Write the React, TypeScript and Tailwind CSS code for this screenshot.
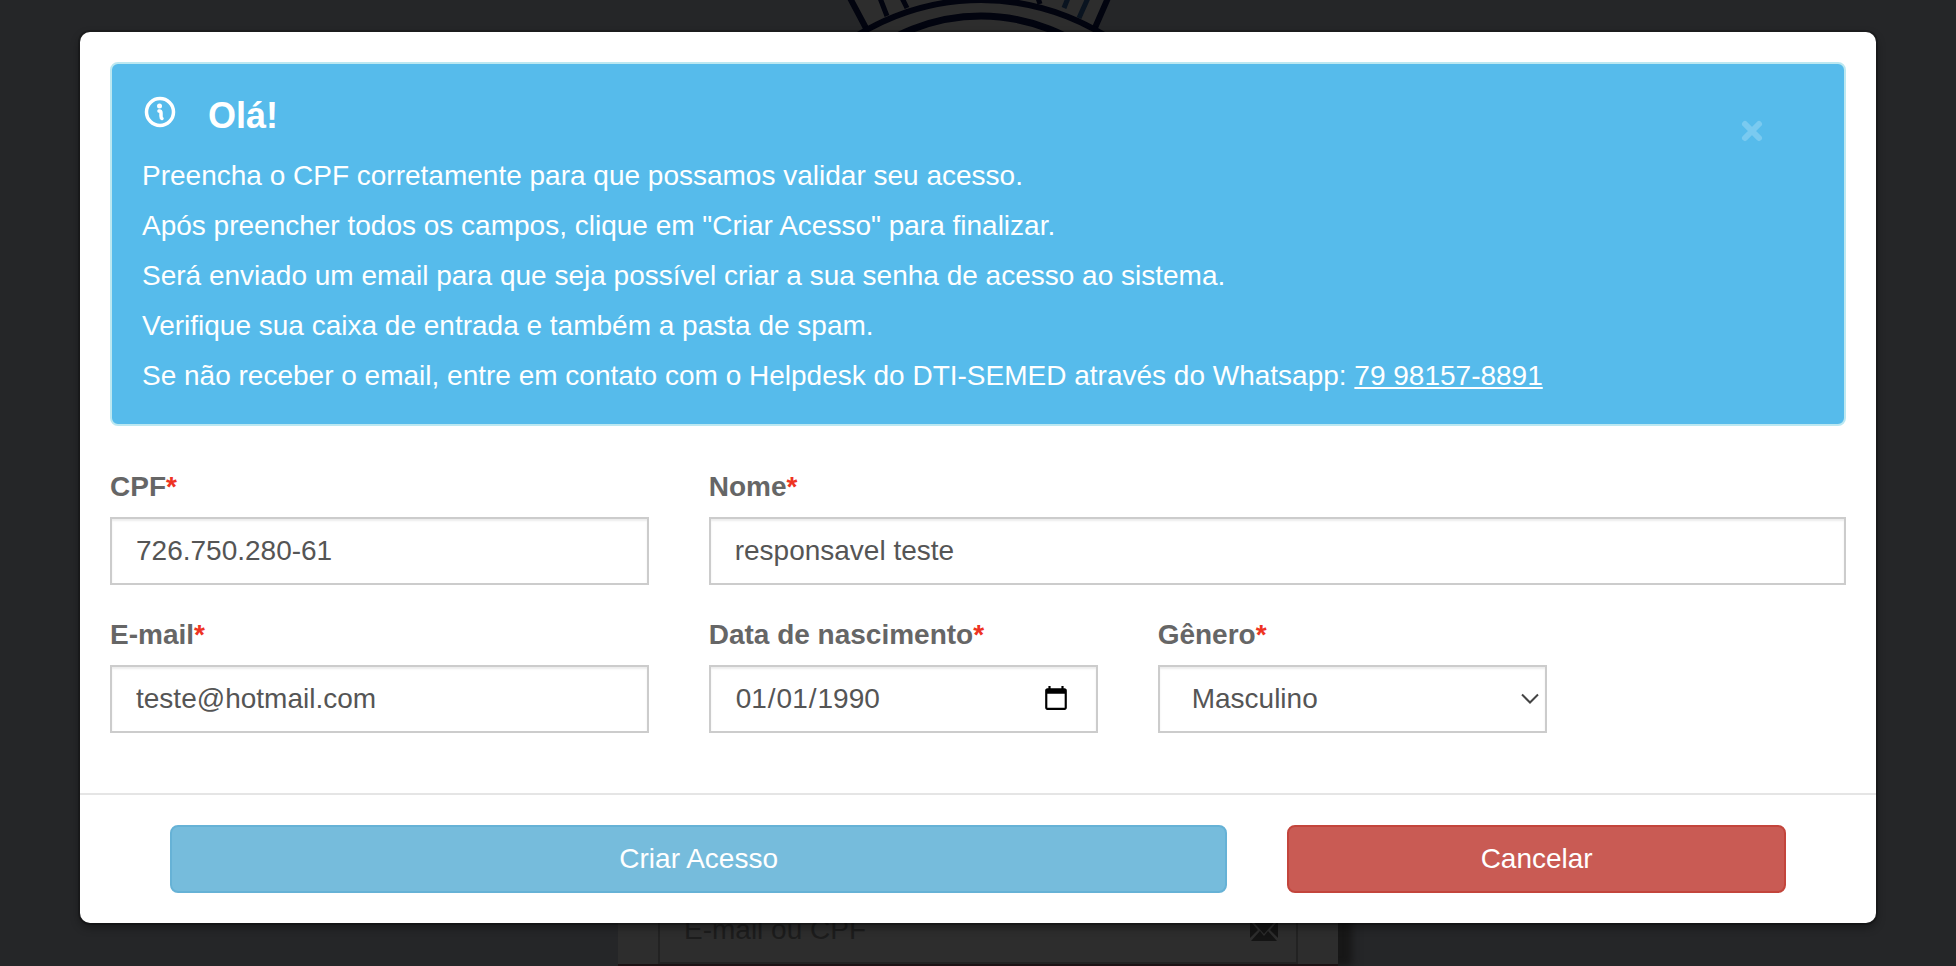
import React, { useState } from 'react';

interface FieldProps {
    id: string;
    label: string;
    className: string;
    children: React.ReactNode;
}

const inputClass =
    'block h-[68px] w-full border-2 border-[#cccccc] bg-white px-6 text-[28px] leading-10 text-[#555555] shadow-[inset_0_2px_2px_rgba(0,0,0,0.075)] outline-none';

const alertLines = [
    'Preencha o CPF corretamente para que possamos validar seu acesso.',
    'Após preencher todos os campos, clique em "Criar Acesso" para finalizar.',
    'Será enviado um email para que seja possível criar a sua senha de acesso ao sistema.',
    'Verifique sua caixa de entrada e também a pasta de spam.',
];

const Field: React.FC<FieldProps> = ({ id, label, className, children }) => (
    <div className={className}>
        <label htmlFor={id} className="mb-2.5 block text-[28px] leading-10 font-bold text-[#666666]">
            {label}
            <span className="text-[#ee3322]">*</span>
        </label>
        {children}
    </div>
);

// Login page that stays dimmed behind the modal
const Backdrop = () => (
    <div className="absolute inset-0 flex flex-col items-center justify-between overflow-hidden bg-[#252628]">
        <svg className="h-8 w-[360px] shrink-0" viewBox="799 0 360 32" fill="none" stroke="#02040f" strokeWidth="5">
            <path d="M852 0 870 32H1094L1108 0Z" fill="#2d2d2d" stroke="none" />
            <path d="M851 -2 868 30M1109 -2 1095 30" strokeWidth="6" />
            <path d="M881 -2 888 16M903 -2 908 8M1039 -2 1041 4" />
            <path d="M1069 -2 1065 8M1089 -2 1080 18" stroke="#0a1420" />
            <circle cx="982" cy="234" r="234" strokeWidth="6" />
            <circle cx="982" cy="201" r="185" strokeWidth="7" />
        </svg>
        <div className="w-[720px] border-b-2 border-[#1d1214] bg-[#2d2d2d] px-10 shadow-[14px_0_8px_#171717]">
            <div className="flex h-[68px] items-center justify-between border-2 border-[#222222] pr-[18px] pl-6 text-[28px] text-[#1c1c1c]">
                <span>E-mail ou CPF</span>
                <svg className="h-6 w-7" viewBox="0 0 28 24" fill="#141414">
                    <path d="M0 0H28L14 16ZM0 3 8 12 0 20ZM28 3V20L20 12ZM1 23 10 13 14 18 18 13 27 23Z" />
                </svg>
            </div>
        </div>
    </div>
);

export default function App() {
    const [cpf, setCpf] = useState<string>('726.750.280-61');
    const [nome, setNome] = useState<string>('responsavel teste');
    const [email, setEmail] = useState<string>('teste@hotmail.com');
    const [nascimento, setNascimento] = useState<string>('1990-01-01');
    const [genero, setGenero] = useState<string>('M');
    const [showAlert, setShowAlert] = useState<boolean>(true);

    return (
        <div className="relative min-h-screen px-20 pt-8 pb-[43px] font-['Liberation_Sans',Arial,sans-serif]">
            <Backdrop />
            <form
                onSubmit={(e) => e.preventDefault()}
                className="relative rounded-[10px] bg-white shadow-[0_0_0_2px_rgba(0,0,0,0.2),0_4px_10px_rgba(0,0,0,0.4)]"
            >
                <div className="px-[30px] pt-[30px] pb-[60px]">
                    {showAlert && (
                        <div className="mb-[41px] rounded-lg border-2 border-[#bce8f1] bg-[#56bbeb] px-[30px] pt-[30px] pb-7 text-[28px] leading-10 text-white">
                            <div className="flex h-[62px] items-start justify-between">
                                <div className="flex items-start gap-8">
                                    <svg className="mt-0.5 ml-0.5 size-8" viewBox="0 0 32 32" fill="none" stroke="currentColor">
                                        <circle cx="16" cy="16" r="13.5" strokeWidth="3.5" />
                                        <circle cx="15.5" cy="10" r="2.5" fill="currentColor" stroke="none" />
                                        <path d="M15 15Q17 14.5 17 17V20Q17 22 18 22.5" strokeWidth="3.5" strokeLinecap="round" />
                                    </svg>
                                    <h4 className="text-4xl leading-11 font-bold">Olá!</h4>
                                </div>
                                <button
                                    type="button"
                                    aria-label="Fechar"
                                    onClick={() => setShowAlert(false)}
                                    className="mt-[21px] mr-[46px] p-1 text-[#7acaf0]"
                                >
                                    <svg className="size-6" viewBox="0 0 24 24" stroke="currentColor" strokeWidth="6" strokeLinecap="round">
                                        <path d="M5 5 19 19M19 5 5 19" />
                                    </svg>
                                </button>
                            </div>
                            <div className="space-y-2.5">
                                {alertLines.map((line) => (
                                    <p key={line}>{line}</p>
                                ))}
                                <p>
                                    Se não receber o email, entre em contato com o Helpdesk do DTI-SEMED através do Whatsapp:{' '}
                                    <a href="#whatsapp" className="underline">79 98157-8891</a>
                                </p>
                            </div>
                        </div>
                    )}

                    <div className="grid grid-cols-12 gap-x-[60px] gap-y-[30px]">
                        <Field id="cpf" label="CPF" className="col-span-4">
                            <input id="cpf" className={inputClass} value={cpf} onChange={(e) => setCpf(e.target.value)} />
                        </Field>
                        <Field id="nome" label="Nome" className="col-span-8">
                            <input id="nome" className={inputClass} value={nome} onChange={(e) => setNome(e.target.value)} />
                        </Field>
                        <Field id="email" label="E-mail" className="col-span-4">
                            <input id="email" type="email" className={inputClass} value={email} onChange={(e) => setEmail(e.target.value)} />
                        </Field>
                        <Field id="nascimento" label="Data de nascimento" className="col-span-3">
                            <input
                                id="nascimento"
                                type="date"
                                className={inputClass}
                                value={nascimento}
                                onChange={(e) => setNascimento(e.target.value)}
                            />
                        </Field>
                        <Field id="genero" label="Gênero" className="col-span-3">
                            <div className="relative">
                                <select
                                    id="genero"
                                    className={`${inputClass} appearance-none pl-8`}
                                    value={genero}
                                    onChange={(e) => setGenero(e.target.value)}
                                >
                                    <option value="M">Masculino</option>
                                    <option value="F">Feminino</option>
                                </select>
                                <svg
                                    className="pointer-events-none absolute top-7 right-2 h-3 w-[18px]"
                                    viewBox="0 0 18 12"
                                    fill="none"
                                    stroke="#444"
                                    strokeWidth="2"
                                >
                                    <path d="M1 1.5 9 9.5 17 1.5" />
                                </svg>
                            </div>
                        </Field>
                    </div>
                </div>

                <div className="grid grid-cols-12 gap-x-[60px] border-t-2 border-[#e5e5e5] px-[90px] py-[30px] text-[28px] leading-10 text-white">
                    <button type="submit" className="col-span-8 h-[68px] rounded-lg border-2 border-[#66b2d6] bg-[#76bcdc]">
                        Criar Acesso
                    </button>
                    <button type="button" className="col-span-4 h-[68px] rounded-lg border-2 border-[#c3453c] bg-[#c95b54]">
                        Cancelar
                    </button>
                </div>
            </form>
        </div>
    );
}
